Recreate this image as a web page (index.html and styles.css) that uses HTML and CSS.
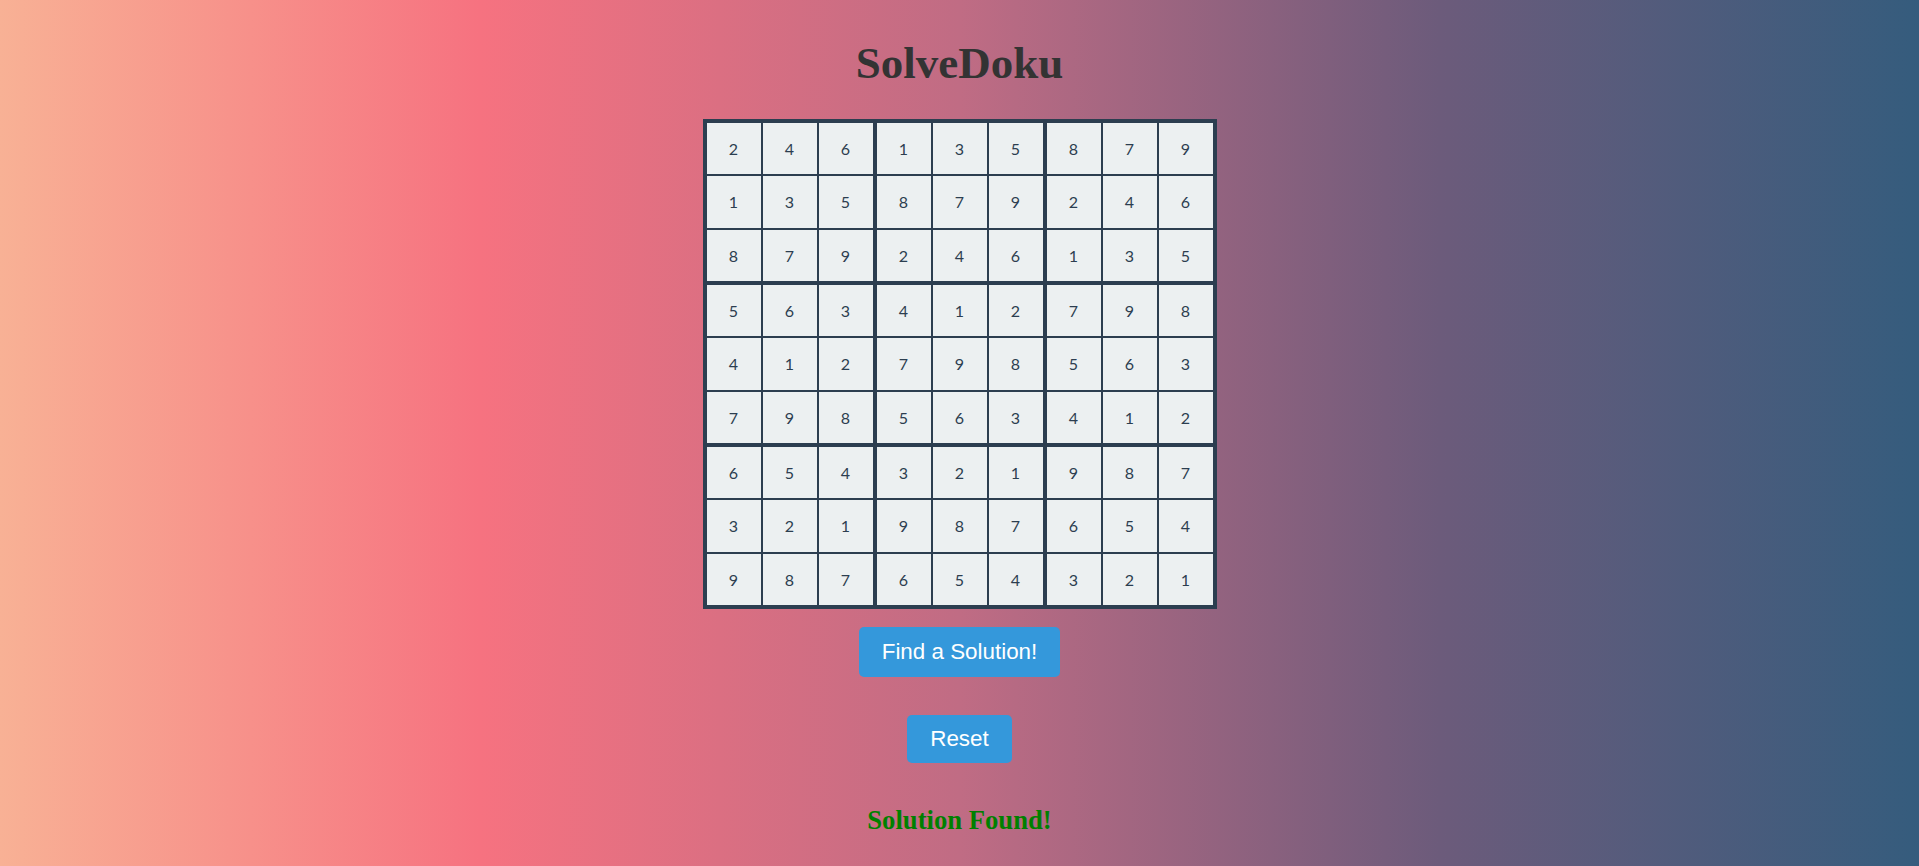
FILE: index.html
```html
<!DOCTYPE html>
<html lang="en">
<head>
<meta charset="utf-8">
<title>SolveDoku</title>
<link rel="stylesheet" href="styles.css">
</head>
<body>
<main class="app">
  <h1 class="title">SolveDoku</h1>
  <div class="board">
    <div class="cell">2</div><div class="cell">4</div><div class="cell">6</div><div class="cell">1</div><div class="cell">3</div><div class="cell">5</div><div class="cell">8</div><div class="cell">7</div><div class="cell">9</div>
    <div class="cell">1</div><div class="cell">3</div><div class="cell">5</div><div class="cell">8</div><div class="cell">7</div><div class="cell">9</div><div class="cell">2</div><div class="cell">4</div><div class="cell">6</div>
    <div class="cell">8</div><div class="cell">7</div><div class="cell">9</div><div class="cell">2</div><div class="cell">4</div><div class="cell">6</div><div class="cell">1</div><div class="cell">3</div><div class="cell">5</div>
    <div class="cell">5</div><div class="cell">6</div><div class="cell">3</div><div class="cell">4</div><div class="cell">1</div><div class="cell">2</div><div class="cell">7</div><div class="cell">9</div><div class="cell">8</div>
    <div class="cell">4</div><div class="cell">1</div><div class="cell">2</div><div class="cell">7</div><div class="cell">9</div><div class="cell">8</div><div class="cell">5</div><div class="cell">6</div><div class="cell">3</div>
    <div class="cell">7</div><div class="cell">9</div><div class="cell">8</div><div class="cell">5</div><div class="cell">6</div><div class="cell">3</div><div class="cell">4</div><div class="cell">1</div><div class="cell">2</div>
    <div class="cell">6</div><div class="cell">5</div><div class="cell">4</div><div class="cell">3</div><div class="cell">2</div><div class="cell">1</div><div class="cell">9</div><div class="cell">8</div><div class="cell">7</div>
    <div class="cell">3</div><div class="cell">2</div><div class="cell">1</div><div class="cell">9</div><div class="cell">8</div><div class="cell">7</div><div class="cell">6</div><div class="cell">5</div><div class="cell">4</div>
    <div class="cell">9</div><div class="cell">8</div><div class="cell">7</div><div class="cell">6</div><div class="cell">5</div><div class="cell">4</div><div class="cell">3</div><div class="cell">2</div><div class="cell">1</div>
  </div>
  <button class="btn btn-solve" type="button">Find a Solution!</button>
  <button class="btn btn-reset" type="button">Reset</button>
  <p class="status">Solution Found!</p>
</main>
</body>
</html>
```

FILE: styles.css
```css
html, body {
  margin: 0;
  padding: 0;
  min-height: 100%;
}

body {
  min-height: 866px;
  background: linear-gradient(to right, #f8b195 0%, #f67280 25%, #c06c84 50%, #6c5b7b 75%, #355c7d 100%);
  font-family: "Liberation Serif", "Times New Roman", serif;
}

.app {
  display: flex;
  flex-direction: column;
  align-items: center;
  padding-top: 37px;
}

.title {
  margin: 0;
  font-family: "Liberation Serif", "Times New Roman", serif;
  font-weight: bold;
  font-size: 45px;
  color: #333333;
}

.board {
  margin-top: 30px;
  display: grid;
  grid-template-columns: repeat(9, auto);
  border: 3px solid #2c3e50;
  background: #2c3e50;
}

.cell {
  width: 54px;
  height: 51.33px;
  border: 1px solid #2c3e50;
  background: #ecf0f1;
  display: flex;
  align-items: center;
  justify-content: center;
  font-family: Lato, "Open Sans", sans-serif;
  font-size: 16px;
  color: #2c3e50;
}

.cell:nth-child(9n+3),
.cell:nth-child(9n+6) {
  border-right-width: 3px;
}

.cell:nth-child(n+19):nth-child(-n+27),
.cell:nth-child(n+46):nth-child(-n+54) {
  border-bottom-width: 3px;
}

.btn {
  border: none;
  border-radius: 5px;
  background: #3498db;
  color: #ffffff;
  font-family: "Liberation Sans", Arial, sans-serif;
  font-size: 22.4px;
  padding: 12px 23px;
  cursor: pointer;
}

.btn-solve {
  margin-top: 18px;
}

.btn-reset {
  margin-top: 38px;
  padding-top: 11px;
  padding-bottom: 11px;
}

.status {
  margin: 42px 0 0;
  font-family: "Liberation Serif", "Times New Roman", serif;
  font-weight: bold;
  font-size: 26.67px;
  color: #008000;
}
```
